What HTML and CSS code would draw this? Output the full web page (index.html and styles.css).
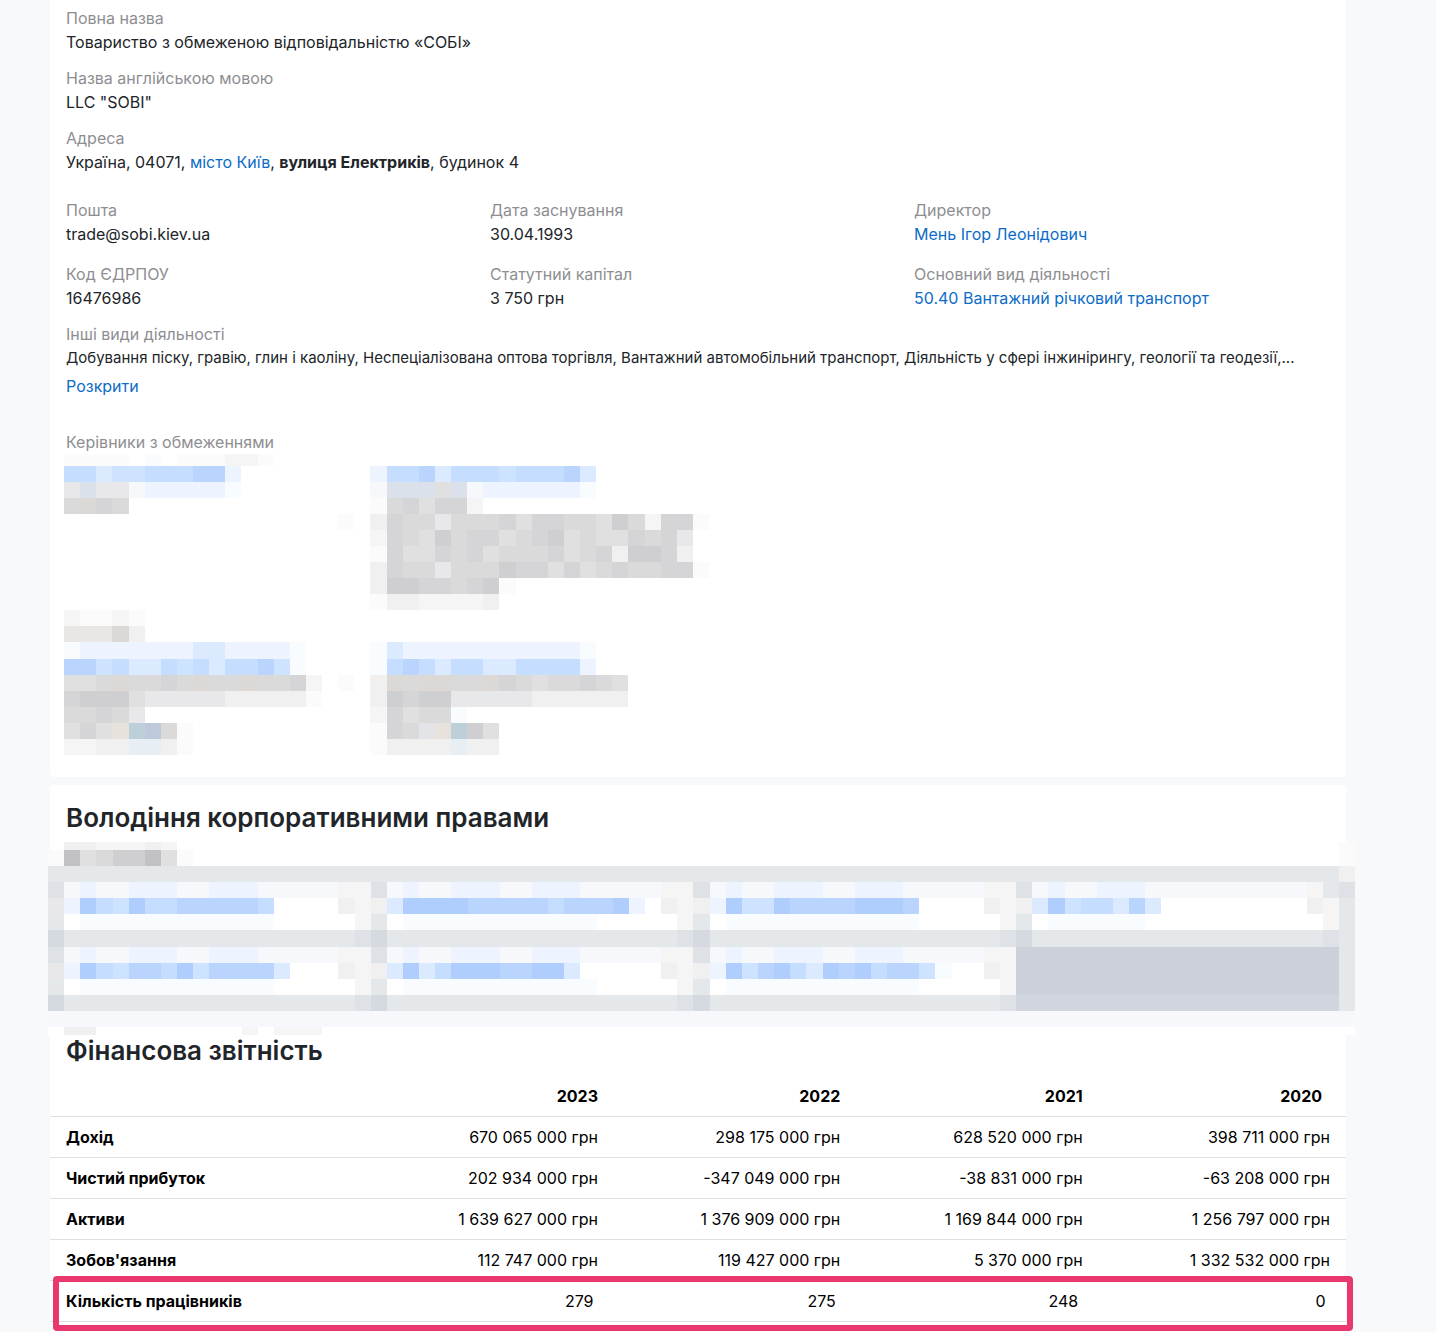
FILE: index.html
```html
<!DOCTYPE html>
<html lang="uk">

<head>
    <meta charset="UTF-8">
    <meta name="viewport" content="width=device-width, initial-scale=1.0">
    <title>ТОВ «СОБІ»</title>
    <link rel="stylesheet" href="styles.css">
</head>

<body>
    <main class="page">
        <section class="card about">
            <dl class="field">
                <dt>Повна назва</dt>
                <dd>Товариство з обмеженою відповідальністю «СОБІ»</dd>
            </dl>
            <dl class="field">
                <dt>Назва англійською мовою</dt>
                <dd>LLC "SOBI"</dd>
            </dl>
            <dl class="field">
                <dt>Адреса</dt>
                <dd>Україна, 04071, <a href="#">місто Київ</a>, <b>вулиця Електриків</b>, будинок 4</dd>
            </dl>

            <div class="facts">
                <dl class="field">
                    <dt>Пошта</dt>
                    <dd>trade@sobi.kiev.ua</dd>
                </dl>
                <dl class="field">
                    <dt>Дата заснування</dt>
                    <dd>30.04.1993</dd>
                </dl>
                <dl class="field">
                    <dt>Директор</dt>
                    <dd><a href="#">Мень Ігор Леонідович</a></dd>
                </dl>
                <dl class="field">
                    <dt>Код ЄДРПОУ</dt>
                    <dd>16476986</dd>
                </dl>
                <dl class="field">
                    <dt>Статутний капітал</dt>
                    <dd>3 750 грн</dd>
                </dl>
                <dl class="field">
                    <dt>Основний вид діяльності</dt>
                    <dd><a href="#">50.40 Вантажний річковий транспорт</a></dd>
                </dl>
            </div>

            <dl class="field">
                <dt>Інші види діяльності</dt>
                <dd class="one-line">Добування піску, гравію, глин і каоліну, Неспеціалізована оптова торгівля, Вантажний автомобільний транспорт, Діяльність у сфері інжинірингу, геології та геодезії,...</dd>
            </dl>
            <a class="expand" href="#">Розкрити</a>

            <dl class="field restricted">
                <dt>Керівники з обмеженнями</dt>
                <dd><svg class="mosaic people" id="people" viewBox="0 0.28 40 18.72" preserveAspectRatio="none"></svg></dd>
            </dl>
        </section>

        <section class="card rights">
            <h2>Володіння корпоративними правами</h2>
            <svg class="mosaic companies" id="companies" viewBox="0 0.5 81 12" preserveAspectRatio="none"></svg>
        </section>

        <section class="card finance">
            <h2>Фінансова звітність</h2>
            <table>
                <thead>
                    <tr>
                        <td></td>
                        <th scope="col">2023</th>
                        <th scope="col">2022</th>
                        <th scope="col">2021</th>
                        <th scope="col">2020</th>
                    </tr>
                </thead>
                <tbody>
                    <tr>
                        <th scope="row">Дохід</th>
                        <td>670 065 000 грн</td>
                        <td>298 175 000 грн</td>
                        <td>628 520 000 грн</td>
                        <td>398 711 000 грн</td>
                    </tr>
                    <tr>
                        <th scope="row">Чистий прибуток</th>
                        <td>202 934 000 грн</td>
                        <td>-347 049 000 грн</td>
                        <td>-38 831 000 грн</td>
                        <td>-63 208 000 грн</td>
                    </tr>
                    <tr>
                        <th scope="row">Активи</th>
                        <td>1 639 627 000 грн</td>
                        <td>1 376 909 000 грн</td>
                        <td>1 169 844 000 грн</td>
                        <td>1 256 797 000 грн</td>
                    </tr>
                    <tr>
                        <th scope="row">Зобов'язання</th>
                        <td>112 747 000 грн</td>
                        <td>119 427 000 грн</td>
                        <td>5 370 000 грн</td>
                        <td>1 332 532 000 грн</td>
                    </tr>
                    <tr class="marked">
                        <th scope="row">Кількість працівників</th>
                        <td>279&nbsp;</td>
                        <td>275&nbsp;</td>
                        <td>248&nbsp;</td>
                        <td>0&nbsp;</td>
                    </tr>
                </tbody>
            </table>
        </section>
    </main>

    <script src="mosaic.js"></script>
</body>

</html>
```
FILE: styles.css
```css
* {
    box-sizing: border-box;
}

body {
    margin: 0;
    background: #f8f9fb;
    color: #212529;
    font-family: Inter, "Liberation Sans", sans-serif;
    font-size: 16px;
    line-height: 24px;
}

a {
    color: #0c6cc8;
    text-decoration: none;
}

h2 {
    margin: 0;
    padding: 0 16px;
    font-size: 26px;
    font-weight: 600;
    line-height: 34px;
}

.page {
    display: flex;
    flex-direction: column;
    gap: 8px;
    padding: 0 90px 0 50px;
}

.card {
    background: #fff;
    border-radius: 4px;
}

/* company details */
.about {
    display: flex;
    flex-direction: column;
    gap: 12px;
    padding: 6px 16px 22px;
    border-radius: 0 0 4px 4px;
}

.field {
    margin: 0;
    min-width: 0;
}

.field dt {
    color: #8e8e92;
}

.field dd {
    margin: 0;
}

.facts {
    display: grid;
    grid-template-columns: repeat(3, 1fr);
    gap: 16px 8px;
    margin-top: 12px;
}

.one-line {
    overflow: hidden;
    font-size: 15px;
    white-space: nowrap;
    text-overflow: ellipsis;
}

.expand {
    align-self: flex-start;
    margin-top: -8px;
}

.restricted {
    margin-top: 20px;
}

/* hidden names */
.mosaic {
    display: block;
    shape-rendering: crispEdges;
}

.people {
    width: 645px;
    height: 301px;
    margin-left: -2px;
}

.companies {
    position: relative;
    width: calc(100% + 11px);
    height: 193px;
    margin: 7px -9px -24px -2px;
}

.rights {
    padding-top: 16px;
}

/* finance table */
.finance {
    padding: 15px 0 10px;
}

table {
    width: 100%;
    margin-top: 8px;
    border-collapse: separate;
    border-spacing: 0;
    table-layout: fixed;
    color: #000;
}

th,
td {
    width: 18.7%;
    padding: 8px;
    border-bottom: 1px solid #dee0e2;
    text-align: right;
    white-space: nowrap;
}

th {
    font-weight: 700;
}

tr > :first-child {
    width: 24.2%;
    padding-left: 16px;
    text-align: left;
}

tr > :last-child {
    width: 19.7%;
    padding-right: 16px;
}

thead th:last-child {
    padding-right: 24px;
}

.marked {
    position: relative;
}

.marked th::after {
    content: "";
    position: absolute;
    inset: -5px -7px -9px 3px;
    border: 6px solid #e8386d;
    border-radius: 4px;
}
```
FILE: mosaic.js
```javascript
const colors = {
    0: '#fbfbfb', 1: '#f5f5f6', 2: '#f0f0f0', 3: '#e8e8ea', 4: '#e0e0e1',
    5: '#dadadb', 6: '#d5d5d7', 7: '#cfcfd1', 8: '#c2c2c4',
    a: '#f8fcff', b: '#edf4ff', c: '#dceaff', d: '#cee3ff', e: '#c5deff', f: '#bad5fd', g: '#afcefd',
    h: '#dae1ea', i: '#f7f8fb', j: '#e5e8eb', k: '#dee2e6', l: '#d5dae0', m: '#cbd0d9', n: '#d1d5dd', o: '#e2e4e8',
    p: '#e8e7e5', q: '#dbd8d6', r: '#f1f0f0', t: '#bdd0da', u: '#bfc9dc', v: '#e7eff5', y: '#e7e3dc', w: '#ffffff'
}

// one letter per cell, a dot is an empty cell
const people = [
    '0000.a.000110',
    'eecddeeeffb ........ beefceeedeeefc',
    '3h33ibbbbba ........ ihhh4hibbbbbba',
    '5q65....... ........ 0564661',
    '........... ......0. 265535556466554751660',
    '........... ........ 16547566456745446563',
    '........... ........ 06446564555645627762',
    '........... ........ 265535557664645655660',
    '........... ........ 277665670',
    '........... ........ 02211112',
    '10010',
    'pppqr',
    'abbbbbbbccbbbba .... acbbbbbbbbbbba',
    'ffdeccedeceefda .... aefeceecceeeeb',
    '445q5565q55q5561.0. 2q5qq55q65455654',
    '67774333332222 20 ... 2767733333222222',
    '55653...... ........ 16455a',
    '464ytu50... ........ 065oyt74',
    '1122vv20... ........ 0222rv22'
]

const line = 'ljjjjjjjjjjjjjjjjjjk'
const light = 'kibiibbbiibbbiiiii11'
const white = 'jwaaaaaaaaaaaawwwww1'
const gray = 'm'.repeat(20)

const companies = [
    '.2211121' + '.'.repeat(72) + '0',
    '084577840' + '.'.repeat(71) + '0',
    'j'.repeat(80) + '2',
    light.repeat(3) + 'kibiibbbiiiiiiiiii1jk',
    '3bgedgeefffffewwwwr1 2cggggfffffefffgbwr1 2bgddgffffgggfwwwwr1 2cgdeecfcwwwwwwwwwr1j',
    white.repeat(3) + 'jwaaaaaawwwwwwwwwww1j',
    line.repeat(4) + 'j',
    light.repeat(3) + gray + 'j',
    '3bgedffegdffffcwwwr1 2cgcegggffggcwwwwwr1 2bgdfgecgfgeffdawwr1' + gray + 'j',
    white.repeat(3) + gray + 'j',
    line.repeat(3) + 'n'.repeat(20) + 'j',
    'i'.repeat(81),
    'w22wwwwwwwww1w111' + 'w'.repeat(64)
]

function draw(id, rows) {
    const svg = document.getElementById(id)
    rows.forEach((row, y) => {
        [...row.replaceAll(' ', '')].forEach((letter, x) => {
            if (!colors[letter]) return
            const rect = document.createElementNS('http://www.w3.org/2000/svg', 'rect')
            rect.setAttribute('x', x)
            rect.setAttribute('y', y)
            rect.setAttribute('width', 1)
            rect.setAttribute('height', 1)
            rect.setAttribute('fill', colors[letter])
            svg.appendChild(rect)
        })
    })
}

draw('people', people)
draw('companies', companies)
```
